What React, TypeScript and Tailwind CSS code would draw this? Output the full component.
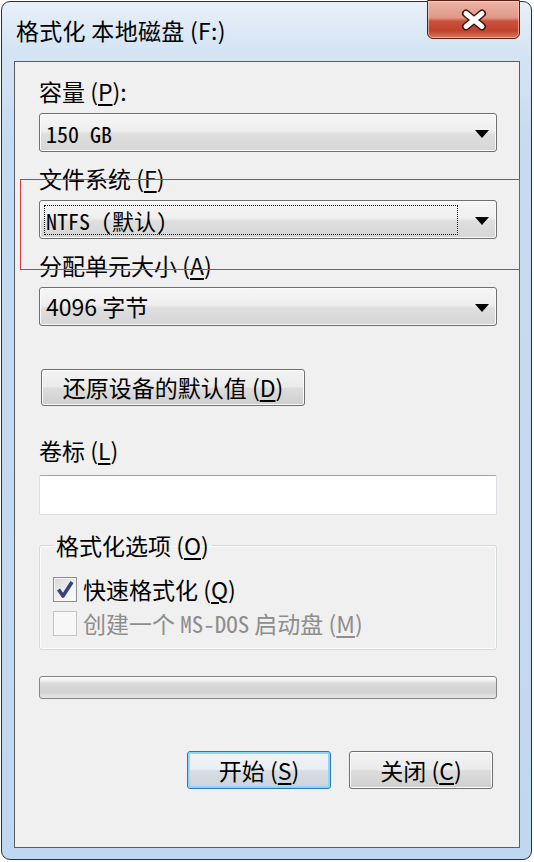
import React from "react";

const CJK = "font-['Noto_Sans_CJK_SC',sans-serif]";
const MONO = "font-['Noto_Sans_Mono_CJK_SC','Liberation_Mono','Noto_Sans_CJK_SC',monospace]";

const Key = ({ k }: { k: string }) => (
  <>
    (<span className="underline underline-offset-[3px]">{k}</span>)
  </>
);

const Label = ({ children, className = "" }: { children: React.ReactNode; className?: string }) => (
  <div className={`${CJK} h-[28px] text-[23px] leading-[28px] text-black ${className}`}>{children}</div>
);

const Arrow = () => (
  <svg width="14" height="8" viewBox="0 0 14 8" className="mr-[7px] mt-[3px] shrink-0">
    <path d="M0 0 H14 L7 8 Z" fill="#000" />
  </svg>
);

const comboClass =
  "flex h-[39px] items-center rounded-[3px] border border-[#707070] bg-[linear-gradient(to_bottom,#f6f6f6_0%,#efefef_45%,#dedede_55%,#d6d6d6_100%)] shadow-[inset_0_0_0_1px_#fafafa]";

const Check = ({ checked, disabled }: { checked?: boolean; disabled?: boolean }) => (
  <div
    className={`flex h-[25px] w-[24px] shrink-0 items-center justify-center border ${
      disabled
        ? "border-[#c4c4c4] bg-[#f7f7f7]"
        : "border-[#8e8f8f] bg-[linear-gradient(135deg,#d6d6d6_0%,#f2f2f2_60%,#ffffff_100%)] shadow-[inset_0_0_0_1px_#f4f4f4]"
    }`}
  >
    {checked && (
      <svg width="20" height="20" viewBox="0 0 20 20">
        <path d="M3.5 10.5 L8 17 L17 3" fill="none" stroke="#34447e" strokeWidth="3.6" strokeLinejoin="round" />
      </svg>
    )}
  </div>
);

const btnClass =
  "flex items-center justify-center rounded-[3px] border text-[23px] leading-none text-black";

export default function App() {
  return (
    <div className="relative h-[862px] w-[534px] overflow-hidden bg-white pl-[1px] pt-[1px]">
      <div className="flex h-[859px] w-[531px] flex-col rounded-[9px] border border-[#28313a] bg-[linear-gradient(to_bottom,#e8f0f9_0px,#d6e5f4_45px,#c6dbf0_140px,#c0d8ef_100%)]">
        {/* title bar */}
        <div className="flex h-[59px] shrink-0 items-start justify-between">
          <div className={`${CJK} pl-[14px] pt-[13px] text-[23px] leading-[30px] tracking-[0.3px] text-black`}>
            格式化 本地磁盘 (F:)
          </div>
          <div className="-mt-[2px] mr-[11px] flex h-[39px] w-[93px] items-center justify-center rounded-b-[6px] border border-[#5a1f14] bg-[linear-gradient(to_bottom,#ebb4a6_0%,#e29887_45%,#c9513b_55%,#c2432c_80%,#d8765f_100%)] shadow-[inset_0_0_0_1px_rgba(255,225,215,0.55)]">
            <svg width="28" height="22" viewBox="0 0 28 22">
              <path d="M6 4.5 L22 17.5 M22 4.5 L6 17.5" stroke="#3d120a" strokeWidth="8" strokeLinecap="round" />
              <path d="M6 4.5 L22 17.5 M22 4.5 L6 17.5" stroke="#ffffff" strokeWidth="5" strokeLinecap="round" />
            </svg>
          </div>
        </div>

        {/* client area */}
        <div className="ml-[12px] mr-[11px] flex flex-1 flex-col border border-[#5b5f63] bg-[#f0f0f0] pl-[24px] pr-[22px] pt-[15px]">
          <Label>
            容量 <Key k="P" />:
          </Label>
          <div className={`mt-[8px] ${comboClass}`}>
            <div className={`${MONO} flex-1 pl-[6px] text-[22px] leading-none`}>150 GB</div>
            <Arrow />
          </div>

          <Label className="mt-[12px]">
            文件系统 <Key k="F" />
          </Label>
          <div className={`mt-[8px] ${comboClass}`}>
            <div className="ml-[4px] mr-[17px] flex h-[30px] flex-1 items-center border border-dotted border-black">
              <span className={`${MONO} pl-[1px] text-[22px] leading-none`}>NTFS (默认)</span>
            </div>
            <Arrow />
          </div>

          <Label className="mt-[12px]">
            分配单元大小 <Key k="A" />
          </Label>
          <div className={`mt-[8px] ${comboClass}`}>
            <div className={`${CJK} flex-1 pl-[6px] text-[23px] leading-none`}>4096 字节</div>
            <Arrow />
          </div>

          <button
            className={`${btnClass} ${CJK} ml-[2px] mt-[43px] h-[37px] w-[264px] border-[#707070] bg-[linear-gradient(to_bottom,#f3f3f3_0%,#ebebeb_48%,#dddddd_52%,#cfcfcf_100%)] shadow-[inset_0_0_0_1px_#fcfcfc]`}
          >
            还原设备的默认值 <Key k="D" />
          </button>

          <Label className="mt-[30px]">
            卷标 <Key k="L" />
          </Label>
          <div className="mt-[11px] h-[40px] rounded-[2px] border border-[#dcdfe3] border-t-[#9ea2a6] bg-white" />

          <fieldset className="mt-[16px] rounded-[3px] border border-[#d5dadd] pb-[12px] pl-[13px] shadow-[inset_0_0_0_1px_#fbfbfb]">
            <legend className={`${CJK} px-[3px] text-[23px] leading-[28px] text-black`}>
              格式化选项 <Key k="O" />
            </legend>
            <div className="mt-[16px] flex h-[28px] items-center gap-[6px]">
              <Check checked />
              <span className={`${CJK} text-[23px] leading-[28px] text-black`}>
                快速格式化 <Key k="Q" />
              </span>
            </div>
            <div className="mt-[6px] flex h-[28px] items-center gap-[6px]">
              <Check disabled />
              <span className={`${CJK} text-[23px] leading-[28px] text-[#8d8d8d]`}>
                创建一个 <span className={`${MONO} text-[23px]`}>MS-DOS</span> 启动盘 <Key k="M" />
              </span>
            </div>
          </fieldset>

          <div className="mt-[26px] h-[23px] rounded-[3px] border border-[#868686] bg-[linear-gradient(to_bottom,#fafafa_0%,#f0f0f0_18%,#d9d9d9_32%,#d3d3d3_72%,#e4e4e4_100%)]" />

          <div className="mt-[52px] flex justify-end gap-[18px] pr-[4px]">
            <button
              className={`${btnClass} ${CJK} h-[38px] w-[144px] border-[#2c78b5] bg-[linear-gradient(to_bottom,#f1f5f8_0%,#e9eef2_48%,#d8dee3_52%,#ccd4da_100%)] shadow-[inset_0_0_0_2px_#8fd7f6]`}
            >
              开始 <Key k="S" />
            </button>
            <button
              className={`${btnClass} ${CJK} h-[38px] w-[144px] border-[#707070] bg-[linear-gradient(to_bottom,#f3f3f3_0%,#ebebeb_48%,#dddddd_52%,#cfcfcf_100%)] shadow-[inset_0_0_0_1px_#fcfcfc]`}
            >
              关闭 <Key k="C" />
            </button>
          </div>
        </div>
        <div className="h-[11px] shrink-0" />
      </div>

      {/* red annotation box */}
      <div className="pointer-events-none absolute left-[20px] top-[179px] h-[91px] w-[500px] border border-[#d53a3a]" />
    </div>
  );
}
